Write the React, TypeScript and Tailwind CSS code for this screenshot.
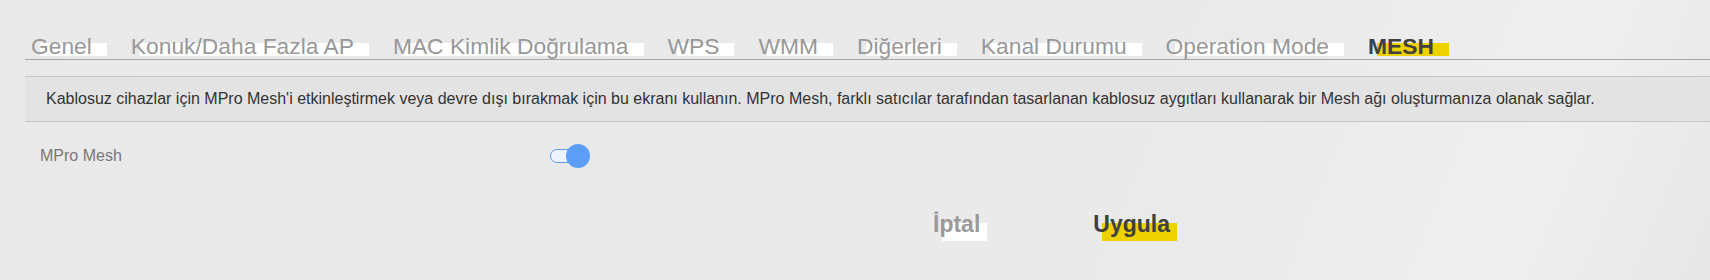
import { useState } from "react";

const tabs = [
  "Genel",
  "Konuk/Daha Fazla AP",
  "MAC Kimlik Doğrulama",
  "WPS",
  "WMM",
  "Diğerleri",
  "Kanal Durumu",
  "Operation Mode",
  "MESH",
];

function Tab({ label, active }: { label: string; active: boolean }) {
  return (
    <div className="relative mr-[39px] h-[26px]">
      {/* marker highlight behind the label */}
      <span
        className={`absolute left-[9px] -right-[15px] top-[10px] h-[13px] ${
          active ? "bg-[#eed200]" : "bg-white"
        }`}
      ></span>
      <span
        className={`relative text-[22.8px] leading-[26px] whitespace-nowrap ${
          active ? "font-bold text-[#404040]" : "text-[#989898]"
        }`}
      >
        {label}
      </span>
    </div>
  );
}

function Toggle() {
  const [on, setOn] = useState(true);
  return (
    <button
      onClick={() => setOn(!on)}
      className="relative w-[40px] h-[24px] flex items-center"
    >
      <span className="absolute left-0 top-[5px] w-[34px] h-[14px] rounded-full border-[1.5px] border-[#5c9df6] bg-[#eef3fb]"></span>
      <span
        className={`absolute top-0 w-[24px] h-[24px] rounded-full bg-[#5c9df6] ${
          on ? "left-[16px]" : "left-0"
        }`}
      ></span>
    </button>
  );
}

export default function App() {
  return (
    <div
      className="min-h-[280px] w-full pl-[25px] bg-[linear-gradient(112deg,#e9e9e9_0%,#eaeaea_70%,#efefef_88%,#e7e7e7_100%)]"
      style={{ fontFamily: '"Liberation Sans", Arial, sans-serif' }}
    >
      {/* Tabs */}
      <div className="pt-[33px]">
        <div className="flex pl-[6px] border-b border-[#a5a5a5]">
          {tabs.map((t) => (
            <Tab key={t} label={t} active={t === "MESH"} />
          ))}
        </div>
      </div>

      {/* Info box */}
      <div className="mt-[16px] h-[46px] flex items-center pl-[21px] border-y border-[#c6c6c6] bg-[#e3e3e3]">
        <p className="text-[16px] text-[#333333] whitespace-nowrap">
          Kablosuz cihazlar için MPro Mesh'i etkinleştirmek veya devre dışı bırakmak için bu ekranı kullanın. MPro Mesh, farklı satıcılar tarafından tasarlanan kablosuz aygıtları kullanarak bir Mesh ağı oluşturmanıza olanak sağlar.
        </p>
      </div>

      {/* MPro Mesh row */}
      <div className="mt-[22px] flex items-center pl-[15px] h-[24px]">
        <span className="w-[510px] text-[16px] text-[#787878]">MPro Mesh</span>
        <Toggle />
      </div>

      {/* Actions */}
      <div className="mt-[43px] flex pl-[908px]">
        <button className="relative mr-[113px] h-[26px]">
          <span className="absolute left-[9px] -right-[7px] top-[12px] h-[18px] bg-white"></span>
          <span className="relative text-[23px] leading-[26px] font-bold text-[#9a9a9a]">
            İptal
          </span>
        </button>
        <button className="relative h-[26px]">
          <span className="absolute left-[9px] -right-[7px] top-[12px] h-[18px] bg-[#eed200]"></span>
          <span className="relative text-[23px] leading-[26px] font-bold text-[#404040]">
            Uygula
          </span>
        </button>
      </div>
    </div>
  );
}
